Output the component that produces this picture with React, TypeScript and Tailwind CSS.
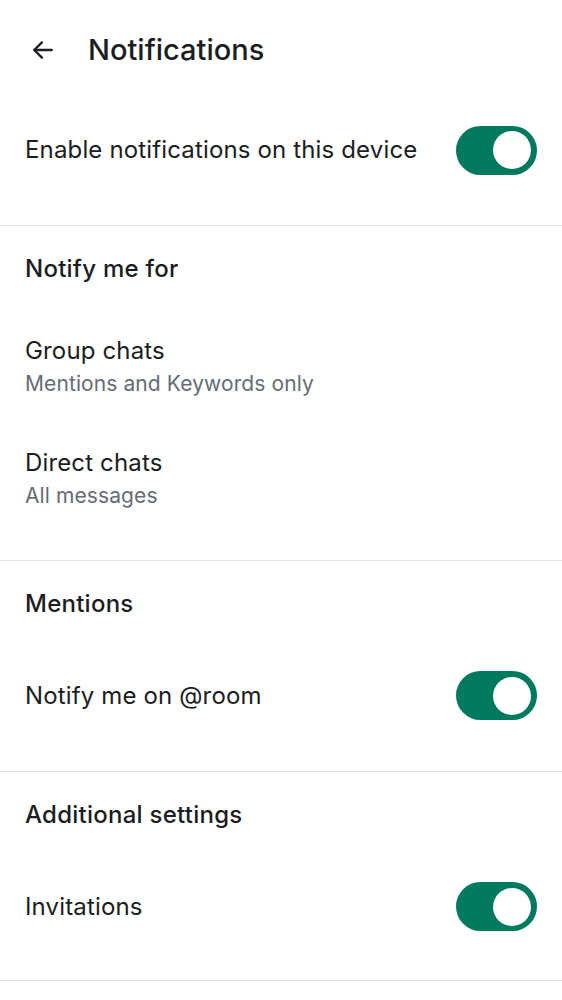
import React from "react";

const font = { fontFamily: "Inter, Roboto, 'Noto Sans', sans-serif" };

function Toggle() {
  return (
    <div className="w-[81px] h-[49px] rounded-full bg-[#007a5e] flex items-center justify-end pr-[6px] shrink-0">
      <div className="w-[38px] h-[38px] rounded-full bg-white" />
    </div>
  );
}

function Divider() {
  return <div className="h-px bg-[#e3e5e8]" />;
}

function SectionTitle({ children }: { children: React.ReactNode }) {
  return (
    <div className="h-[85px] flex items-center px-[25px] text-[24px] font-medium tracking-[0.25px] text-[#1b1d22]">
      {children}
    </div>
  );
}

function ToggleRow({ label }: { label: string }) {
  return (
    <div className="h-[99px] flex items-center justify-between px-[25px] text-[24px] tracking-[0.15px] text-[#1b1d22]">
      <span>{label}</span>
      <Toggle />
    </div>
  );
}

function TwoLineRow({ title, sub }: { title: string; sub: string }) {
  return (
    <div className="h-[112px] flex flex-col justify-center px-[25px]">
      <div className="text-[24px] tracking-[0.15px] text-[#1b1d22] leading-[32px]">{title}</div>
      <div className="text-[21px] tracking-[0.1px] text-[#656c76] leading-[33px]">{sub}</div>
    </div>
  );
}

export default function App() {
  return (
    <div className="w-[562px] h-[1000px] bg-white overflow-hidden" style={font}>
      <div className="h-[100px] flex items-center">
        <div className="w-[88px] flex items-center pl-[30px]">
          <svg width="26" height="26" viewBox="0 0 24 24" fill="none" stroke="#1b1d22" strokeWidth="2.2" strokeLinecap="round" strokeLinejoin="round">
            <path d="M20 12H4" />
            <path d="M11 5l-7 7 7 7" />
          </svg>
        </div>
        <div className="text-[29px] font-medium text-[#1b1d22]">Notifications</div>
      </div>
      <div className="h-[100px] flex items-center justify-between px-[25px] text-[24px] tracking-[0.15px] text-[#1b1d22]">
        <span>Enable notifications on this device</span>
        <Toggle />
      </div>
      <div className="h-[25px]" />
      <Divider />
      <SectionTitle>Notify me for</SectionTitle>
      <TwoLineRow title="Group chats" sub="Mentions and Keywords only" />
      <TwoLineRow title="Direct chats" sub="All messages" />
      <div className="h-[25px]" />
      <Divider />
      <SectionTitle>Mentions</SectionTitle>
      <ToggleRow label="Notify me on @room" />
      <div className="h-[26px]" />
      <Divider />
      <SectionTitle>Additional settings</SectionTitle>
      <ToggleRow label="Invitations" />
      <div className="h-[24px]" />
      <Divider />
    </div>
  );
}
